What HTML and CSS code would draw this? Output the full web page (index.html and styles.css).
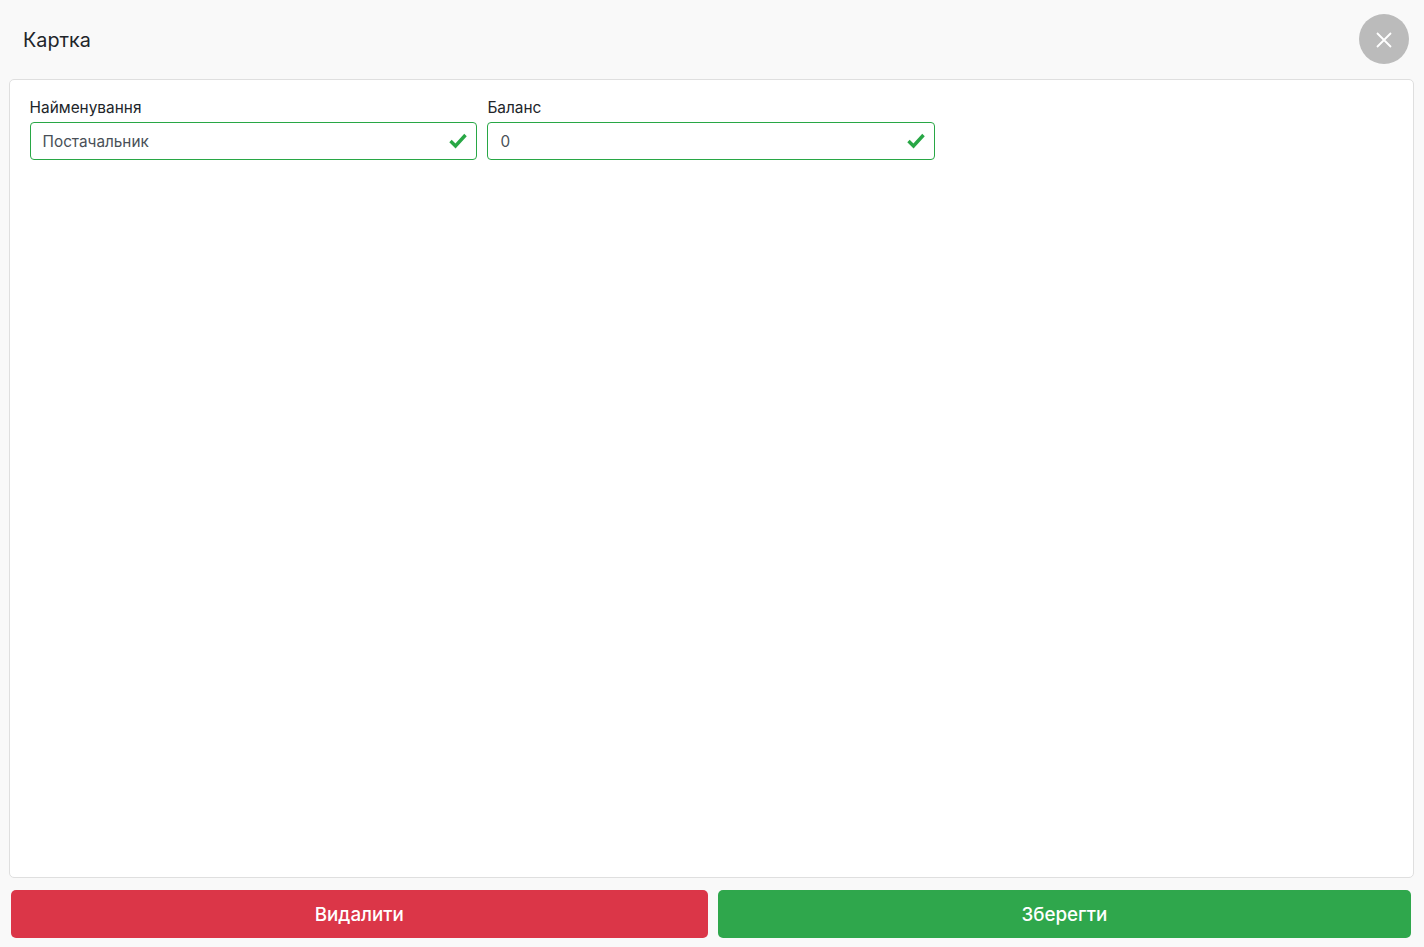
FILE: index.html
```html
<!DOCTYPE html>
<html lang="en">
<head>
    <meta charset="UTF-8">
    <meta name="viewport" content="width=device-width, initial-scale=1.0">
    <title>Картка</title>
    <link rel="stylesheet" href="styles.css">
</head>
<body>
    <div class="page">
        <div class="header">
            <h1 class="title">Картка</h1>
            <button class="close" type="button" aria-label="Close">
                <svg width="16" height="16" viewBox="0 0 16 16"><path d="M1 1L15 15M15 1L1 15" stroke="#fff" stroke-width="1.8" fill="none"/></svg>
            </button>
        </div>

        <div class="card">
            <div class="form-grid">
                <div class="field">
                    <label class="label" for="name">Найменування</label>
                    <div class="input-wrap">
                        <input class="input" type="text" id="name" value="Постачальник">
                        <svg class="check" width="18" height="16" viewBox="0 0 18 16"><path d="M1.5 8L6.5 13L16.5 2" stroke="#28a745" stroke-width="3.4" fill="none"/></svg>
                    </div>
                </div>
                <div class="field">
                    <label class="label" for="balance">Баланс</label>
                    <div class="input-wrap">
                        <input class="input" type="text" id="balance" value="0">
                        <svg class="check" width="18" height="16" viewBox="0 0 18 16"><path d="M1.5 8L6.5 13L16.5 2" stroke="#28a745" stroke-width="3.4" fill="none"/></svg>
                    </div>
                </div>
            </div>
        </div>

        <div class="actions">
            <button class="btn btn-delete" type="button">Видалити</button>
            <button class="btn btn-save" type="button">Зберегти</button>
        </div>
    </div>
</body>
</html>
```
FILE: styles.css
```css
* {
    box-sizing: border-box;
}
html, body {
    height: 100%;
}
body {
    margin: 0;
    font-family: Inter, "Noto Sans", sans-serif;
    background-color: #f9f9f9;
    color: #212529;
}
.page {
    display: flex;
    flex-direction: column;
    height: 100%;
    padding: 0 10px 9px 9px;
}
.header {
    display: flex;
    justify-content: space-between;
    align-items: center;
    height: 79px;
    padding: 0 5px 0 14px;
}
.title {
    margin: 0;
    font-size: 19.8px;
    font-weight: 400;
}
.close {
    display: flex;
    justify-content: center;
    align-items: center;
    width: 50px;
    height: 50px;
    margin-bottom: 1px;
    padding: 2px 0 0;
    border: none;
    border-radius: 50%;
    background-color: #bbbbbb;
}
.card {
    flex: 1;
    padding: 17px 20px 17px 19.6px;
    background-color: #fff;
    border: 1px solid #dfdfdf;
    border-radius: 5px;
}
.form-grid {
    display: grid;
    grid-template-columns: repeat(3, 1fr);
    gap: 10px;
}
.label {
    display: block;
    margin-bottom: 4px;
    font-size: 15.4px;
    line-height: 21px;
}
.input-wrap {
    position: relative;
}
.input {
    display: block;
    width: 100%;
    height: 38px;
    padding: 0 40px 0 12px;
    border: 1px solid #28a745;
    border-radius: 4px;
    font-family: inherit;
    font-size: 15.3px;
    color: #495057;
    background-color: #fff;
}
.check {
    position: absolute;
    top: 11px;
    right: 10px;
}
.actions {
    display: flex;
    gap: 10px;
    margin-top: 12px;
    padding: 0 3px 0 2px;
}
.btn {
    flex: 1 1 auto;
    height: 48px;
    padding: 0 12px;
    border: none;
    border-radius: 5px;
    color: #fff;
    font-family: inherit;
    font-size: 18.8px;
    font-weight: 500;
}
.btn-delete {
    background-color: #db3648;
}
.btn-save {
    background-color: #2fa74c;
}
```
